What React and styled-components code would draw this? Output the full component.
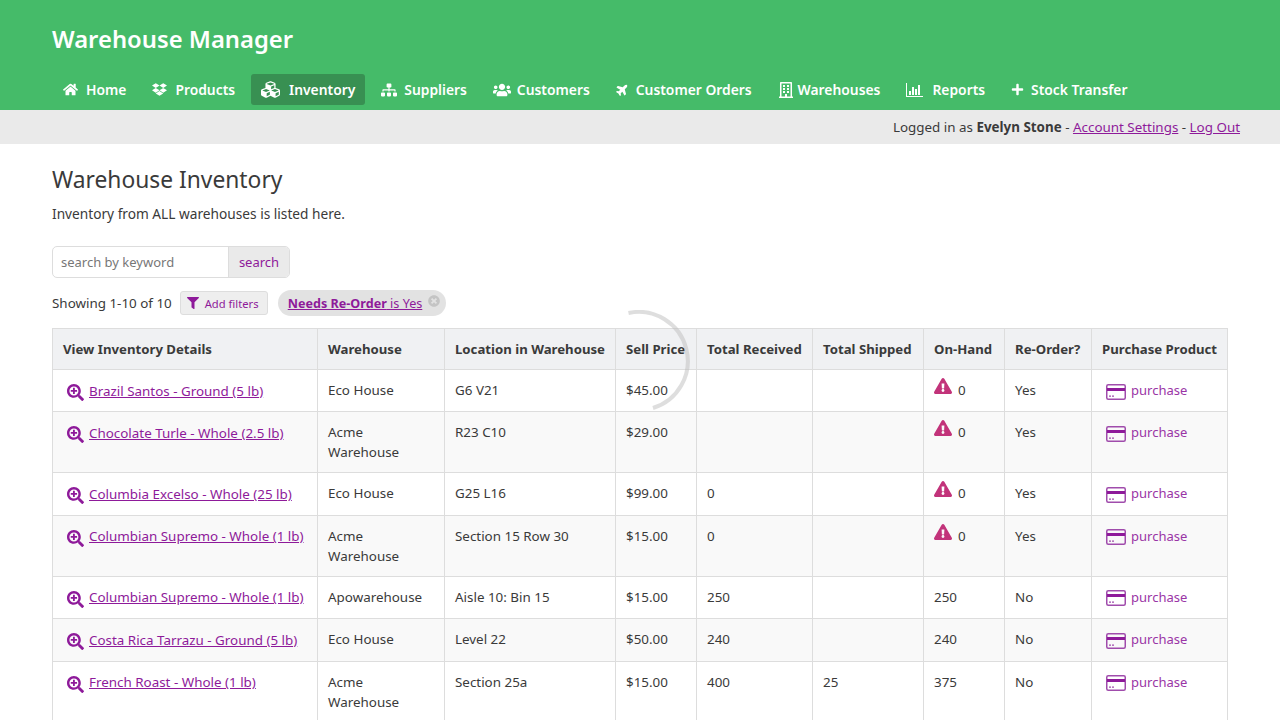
import React from 'react';
import styled, { createGlobalStyle } from 'styled-components';
import {
  FaHome, FaDropbox, FaCubes, FaSitemap, FaUsers, FaPlane, FaRegBuilding,
  FaPlus, FaFilter, FaSearchPlus, FaExclamationTriangle, FaTimesCircle,
} from 'react-icons/fa';

const Global = createGlobalStyle`
  html, body {
    margin: 0;
    height: 720px;
    overflow: hidden;
    background: #fff;
    font-family: "Noto Sans", "Open Sans", sans-serif;
    font-size: 13.4px;
    color: #3a3a3a;
  }
`;

const Header = styled.header`
  height: 110px;
  box-sizing: border-box;
  background: #45bb69;
  padding: 22px 52px 0;
`;

const Brand = styled.h1`
  margin: 0;
  height: 52px;
  font-size: 23.8px;
  line-height: 34px;
  font-weight: 600;
  color: #fff;
`;

const Nav = styled.nav`
  display: flex;
  gap: 6px;
  margin-left: 1px;
`;

const NavItem = styled.a`
  display: flex;
  align-items: center;
  height: 31px;
  padding: 0 10px;
  border-radius: 3px;
  color: #fff;
  font-size: 13.85px;
  font-weight: 600;
  white-space: nowrap;
  background: ${(p) => (p.$active ? '#389052' : 'transparent')};
`;

const NavIcon = styled.span`
  display: flex;
  align-items: center;
  width: ${(p) => p.$w}px;
  font-size: ${(p) => p.$s}px;
  svg { transform: rotate(${(p) => p.$rot || 0}deg); }
`;

const UserBar = styled.div`
  height: 34px;
  background: #eaeaea;
  display: flex;
  align-items: center;
  justify-content: flex-end;
  padding: 0 40px;
  white-space: pre;
`;

const Link = styled.a`
  color: #8e1a9a;
  text-decoration: underline;
`;

const Main = styled.main`
  padding: 0 52px;
`;

const Title = styled.h2`
  margin: 20px 0 0;
  font-size: 22.8px;
  line-height: 32px;
  font-weight: 400;
`;

const Intro = styled.p`
  margin: 8px 0 0;
  font-size: 13.7px;
  line-height: 20px;
`;

const SearchBox = styled.div`
  display: flex;
  width: 238px;
  height: 32px;
  margin-top: 22px;
  box-sizing: border-box;
  border: 1px solid #ddd;
  border-radius: 5px;
  overflow: hidden;
`;

const SearchInput = styled.div`
  flex: 1;
  padding-left: 8px;
  line-height: 30px;
  font-size: 13px;
  color: #777;
`;

const SearchButton = styled.div`
  width: 60px;
  text-align: center;
  line-height: 30px;
  font-size: 13px;
  color: #8e1a9a;
  background: #eaeaea;
  border-left: 1px solid #ddd;
`;

const FilterRow = styled.div`
  display: flex;
  align-items: center;
  height: 26px;
  margin-top: 12px;
`;

const FilterButton = styled.div`
  display: flex;
  align-items: center;
  gap: 6px;
  width: 88px;
  height: 24px;
  box-sizing: border-box;
  margin: 0 10px 0 8px;
  padding: 0 6px;
  border: 1px solid #ddd;
  border-radius: 3px;
  background: #eee;
  color: #8e1a9a;
  font-size: 11.2px;
  white-space: nowrap;
  svg { font-size: 12px; flex: none; }
`;

const FilterChip = styled.div`
  position: relative;
  display: flex;
  align-items: center;
  height: 26px;
  width: 168px;
  box-sizing: border-box;
  padding-left: 10px;
  border-radius: 13px;
  background: #e2e2e2;
  font-size: 12.6px;
  white-space: pre;
  svg {
    position: absolute;
    top: 5px;
    right: 6px;
    color: #c4c4c4;
    font-size: 12px;
  }
`;

const Table = styled.table`
  width: 1175px;
  margin-top: 12px;
  border-collapse: collapse;
  table-layout: fixed;
`;

const Th = styled.th`
  height: 40px;
  padding: 0 10px;
  border: 1px solid #ddd;
  background: #f0f1f3;
  text-align: left;
  font-size: 13.2px;
  font-weight: 700;
  white-space: nowrap;
`;

const Row = styled.tr`
  height: 42.4px;
  &:nth-child(even) > td { background: #f9f9f9; }
`;

const Td = styled.td`
  padding: 10px 10px;
  border: 1px solid #ddd;
  vertical-align: top;
  line-height: 20px;
`;

const Detail = styled.div`
  display: flex;
  align-items: center;
  gap: 5px;
  padding-left: 4px;
  white-space: nowrap;
  svg { color: #8e1a9a; font-size: 17px; flex: none; margin-top: 4px; }
`;

const Stock = styled.div`
  display: flex;
  gap: 6px;
  svg { color: #c2337a; font-size: 18px; margin-top: -3px; }
`;

const Purchase = styled.a`
  display: flex;
  align-items: center;
  gap: 5px;
  padding-left: 4px;
  color: #9a35a6;
  font-size: 13px;
  svg { flex: none; margin-top: 3px; }
`;

const Spinner = styled.svg`
  position: fixed;
  left: 590px;
  top: 310px;
  pointer-events: none;
`;

const ChartIcon = () => (
  <svg width="17" height="14" viewBox="0 0 17 14" fill="currentColor">
    <path d="M0 0h1v13h16v1H0z" />
    <path d="M3 8h2v4H3zM6 4h2v8H6zM9 6h2v6H9zM12 2h2v10h-2z" />
  </svg>
);

const CardIcon = () => (
  <svg width="20" height="16" viewBox="0 0 20 16">
    <rect x="0.75" y="0.75" width="18.5" height="14.5" rx="1.5" fill="none" stroke="#a04cac" strokeWidth="1.5" />
    <path d="M1 4h18v3H1z" fill="#8e1a9a" />
    <path d="M3 11.5h2v1.2H3zM6 11.5h2v1.2H6z" fill="#a04cac" />
  </svg>
);

const navItems = [
  ['Home', FaHome, 23, 15],
  ['Products', FaDropbox, 23, 15],
  ['Inventory', FaCubes, 28, 19, true],
  ['Suppliers', FaSitemap, 23, 16],
  ['Customers', FaUsers, 24, 18],
  ['Customer Orders', FaPlane, 20, 13, false, -45],
  ['Warehouses', FaRegBuilding, 20, 16],
  ['Reports', ChartIcon, 26, 14],
  ['Stock Transfer', FaPlus, 20, 13],
];

const columns = [
  ['View Inventory Details', 265],
  ['Warehouse', 127],
  ['Location in Warehouse', 171],
  ['Sell Price', 81],
  ['Total Received', 116],
  ['Total Shipped', 111],
  ['On-Hand', 81],
  ['Re-Order?', 87],
  ['Purchase Product', 136],
];

const rows = [
  ['Brazil Santos - Ground (5 lb)', 'Eco House', 'G6 V21', '$45.00', '', '', 0, 'Yes'],
  ['Chocolate Turle - Whole (2.5 lb)', 'Acme Warehouse', 'R23 C10', '$29.00', '', '', 0, 'Yes'],
  ['Columbia Excelso - Whole (25 lb)', 'Eco House', 'G25 L16', '$99.00', '0', '', 0, 'Yes'],
  ['Columbian Supremo - Whole (1 lb)', 'Acme Warehouse', 'Section 15 Row 30', '$15.00', '0', '', 0, 'Yes'],
  ['Columbian Supremo - Whole (1 lb)', 'Apowarehouse', 'Aisle 10: Bin 15', '$15.00', '250', '', 250, 'No'],
  ['Costa Rica Tarrazu - Ground (5 lb)', 'Eco House', 'Level 22', '$50.00', '240', '', 240, 'No'],
  ['French Roast - Whole (1 lb)', 'Acme Warehouse', 'Section 25a', '$15.00', '400', '25', 375, 'No'],
];

export default function App() {
  return (
    <>
      <Global />
      <Header>
        <Brand>Warehouse Manager</Brand>
        <Nav>
          {navItems.map(([label, Icon, w, s, active, rot]) => (
            <NavItem key={label} $active={active}>
              <NavIcon $w={w} $s={s} $rot={rot}><Icon /></NavIcon>
              {label}
            </NavItem>
          ))}
        </Nav>
      </Header>
      <UserBar>
        <span>Logged in as <b>Evelyn Stone</b> - </span>
        <Link>Account Settings</Link>
        <span> - </span>
        <Link>Log Out</Link>
      </UserBar>
      <Main>
        <Title>Warehouse Inventory</Title>
        <Intro>Inventory from ALL warehouses is listed here.</Intro>
        <SearchBox>
          <SearchInput>search by keyword</SearchInput>
          <SearchButton>search</SearchButton>
        </SearchBox>
        <FilterRow>
          Showing 1-10 of 10
          <FilterButton><FaFilter /> Add filters</FilterButton>
          <FilterChip>
            <Link><b>Needs Re-Order</b> is Yes</Link>
            <FaTimesCircle />
          </FilterChip>
        </FilterRow>
        <Table>
          <colgroup>
            {columns.map(([label, width]) => <col key={label} style={{ width }} />)}
          </colgroup>
          <thead>
            <tr>{columns.map(([label]) => <Th key={label}>{label}</Th>)}</tr>
          </thead>
          <tbody>
            {rows.map(([name, house, location, price, received, shipped, onHand, reorder], i) => (
              <Row key={i}>
                <Td><Detail><FaSearchPlus /><Link>{name}</Link></Detail></Td>
                <Td>{house}</Td>
                <Td>{location}</Td>
                <Td>{price}</Td>
                <Td>{received}</Td>
                <Td>{shipped}</Td>
                <Td>
                  {onHand === 0 ? <Stock><FaExclamationTriangle /> 0</Stock> : onHand}
                </Td>
                <Td>{reorder}</Td>
                <Td><Purchase><CardIcon /> purchase</Purchase></Td>
              </Row>
            ))}
          </tbody>
        </Table>
      </Main>
      <Spinner width="102" height="102" viewBox="0 0 102 102">
        <path d="M38.5 3 A49.1 49.1 0 0 1 63 98" fill="none" stroke="rgba(190,190,190,0.5)" strokeWidth="4" />
      </Spinner>
    </>
  );
}
